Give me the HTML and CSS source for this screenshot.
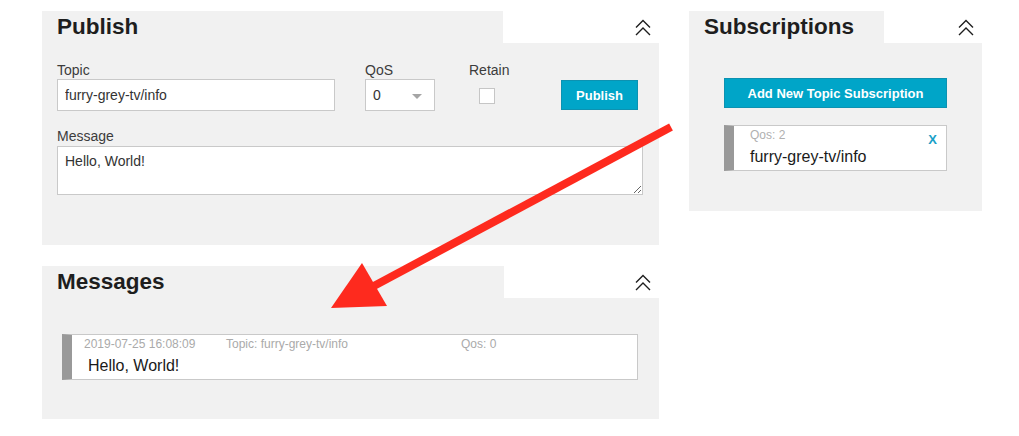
FILE: index.html
```html
<!DOCTYPE html>
<html lang="en">
<head>
<meta charset="utf-8">
<title>MQTT Client</title>
<link rel="stylesheet" href="styles.css">
</head>
<body>
<div class="page">
  <div class="col col-left">
    <section class="panel">
      <header class="panel-head">
        <h2 class="panel-title title-publish">Publish</h2>
        <div class="panel-toggle">
          <svg class="chevron" width="16" height="17" viewBox="0 0 16 17"><polyline points="1,8.5 8,1.5 15,8.5"/><polyline points="1,16 8,9 15,16"/></svg>
        </div>
      </header>
      <div class="panel-body publish-body">
        <div class="form-row">
          <div class="field field-topic">
            <label class="field-label">Topic</label>
            <input class="text-input" type="text" value="furry-grey-tv/info">
          </div>
          <div class="field field-qos">
            <label class="field-label">QoS</label>
            <div class="select-box"><span class="select-value">0</span><span class="select-arrow"></span></div>
          </div>
          <div class="field field-retain">
            <label class="field-label">Retain</label>
            <input class="check" type="checkbox">
          </div>
          <button class="btn btn-publish" type="button">Publish</button>
        </div>
        <div class="field field-message">
          <label class="field-label">Message</label>
          <textarea class="text-area">Hello, World!</textarea>
        </div>
      </div>
    </section>

    <section class="panel panel-messages">
      <header class="panel-head">
        <h2 class="panel-title title-messages">Messages</h2>
        <div class="panel-toggle">
          <svg class="chevron" width="16" height="17" viewBox="0 0 16 17"><polyline points="1,8.5 8,1.5 15,8.5"/><polyline points="1,16 8,9 15,16"/></svg>
        </div>
      </header>
      <div class="panel-body messages-body">
        <div class="msg-item">
          <div class="msg-meta">
            <span class="meta-date">2019-07-25 16:08:09</span>
            <span class="meta-topic">Topic: furry-grey-tv/info</span>
            <span class="meta-qos">Qos: 0</span>
          </div>
          <div class="msg-text">Hello, World!</div>
        </div>
      </div>
    </section>
  </div>

  <div class="col col-right">
    <section class="panel">
      <header class="panel-head">
        <h2 class="panel-title title-subs">Subscriptions</h2>
        <div class="panel-toggle">
          <svg class="chevron" width="16" height="17" viewBox="0 0 16 17"><polyline points="1,8.5 8,1.5 15,8.5"/><polyline points="1,16 8,9 15,16"/></svg>
        </div>
      </header>
      <div class="panel-body subs-body">
        <button class="btn btn-add" type="button">Add New Topic Subscription</button>
        <div class="sub-item">
          <div class="sub-qos">Qos: 2</div>
          <div class="sub-topic">furry-grey-tv/info</div>
          <span class="sub-close">X</span>
        </div>
      </div>
    </section>
  </div>
</div>

<svg class="annotation" width="1019" height="436" viewBox="0 0 1019 436">
  <line x1="671" y1="127" x2="372" y2="287" stroke="#fe2a1e" stroke-width="8"/>
  <polygon points="331,308 362,263 387,306" fill="#fe2a1e"/>
</svg>
</body>
</html>
```

FILE: styles.css
```css
* { box-sizing: border-box; }

html, body {
  margin: 0;
  padding: 0;
  background: #ffffff;
}

body {
  font-family: "Liberation Sans", Arial, Helvetica, sans-serif;
  color: #333;
  width: 1019px;
  height: 436px;
  overflow: hidden;
  position: relative;
}

.page {
  display: flex;
  gap: 30px;
  padding: 11px 0 0 42px;
}

.col-left { width: 617px; }
.col-right { width: 293px; }

.panel { background: transparent; }
.panel-messages { margin-top: 21px; }

.panel-head {
  display: flex;
  height: 32px;
}

.panel-title {
  margin: 0;
  background: #f1f1f1;
  font-size: 22.5px;
  font-weight: bold;
  line-height: 32px;
  color: #1e1e1e;
  padding-left: 15px;
}

.title-publish { width: 461px; }
.title-messages { width: 462px; }
.title-subs { width: 195px; }

.panel-toggle {
  flex: 1;
  background: #ffffff;
  display: flex;
  justify-content: flex-end;
  align-items: center;
  padding-right: 8px;
}

.chevron {
  display: block;
  fill: none;
  stroke: #1e1e1e;
  stroke-width: 1.4;
}

.panel-body { background: #f1f1f1; }

/* Publish */
.publish-body { padding: 19px 16px 50px 15px; }

.form-row {
  display: flex;
  align-items: flex-start;
}

.field-label {
  display: block;
  font-size: 14px;
  line-height: 17px;
  color: #3c3c3c;
}

.field-topic { width: 278px; margin-right: 30px; }
.field-qos { width: 70px; margin-right: 34px; }
.field-retain { width: 41px; display: flex; flex-direction: column; }

.text-input {
  display: block;
  width: 278px;
  height: 32px;
  border: 1px solid #c9c9c9;
  background: #fff;
  padding: 0 7px;
  font-family: inherit;
  font-size: 14px;
  color: #333;
  outline: none;
  margin: 0;
}

.select-box {
  display: flex;
  align-items: center;
  justify-content: space-between;
  width: 70px;
  height: 32px;
  border: 1px solid #c9c9c9;
  background: #fff;
  padding: 0 12px 0 7px;
  font-size: 14px;
  color: #333;
}

.select-arrow {
  width: 0;
  height: 0;
  border-left: 5px solid transparent;
  border-right: 5px solid transparent;
  border-top: 5px solid #a5a5a5;
  margin-top: 2px;
}

.check {
  appearance: none;
  -webkit-appearance: none;
  width: 16px;
  height: 16px;
  margin: 9px 0 0 10px;
  border: 1px solid #c6c6c6;
  background: #fff;
  border-radius: 0;
}

.btn {
  font-family: inherit;
  font-weight: bold;
  font-size: 13px;
  color: #fff;
  background: #00a5c8;
  border: 1px solid #0c92b1;
  border-radius: 0;
  padding: 0;
  cursor: pointer;
}

.btn-publish {
  width: 77px;
  height: 30px;
  margin: 18px 0 0 51px;
}

.field-message { margin-top: 17px; }
.field-message .field-label { margin-bottom: 1px; }

.text-area {
  display: block;
  width: 586px;
  height: 49px;
  border: 1px solid #c9c9c9;
  background: #fff;
  padding: 6px 7px;
  font-family: inherit;
  font-size: 14px;
  line-height: 16px;
  color: #333;
  outline: none;
  margin: 0;
  resize: vertical;
}

/* Messages */
.messages-body { padding: 36px 21px 39px 20px; }

.msg-item {
  background: #fff;
  border: 1px solid #c9c9c9;
  border-left: 10px solid #999;
  padding: 2px 0 3px 12px;
}

.msg-meta {
  display: flex;
  font-size: 12px;
  line-height: 14px;
  color: #aaa;
}

.meta-date { width: 142px; }
.meta-topic { width: 235px; }

.msg-text {
  margin-top: 5px;
  padding-left: 4px;
  font-size: 16px;
  line-height: 20px;
  color: #1a1a1a;
}

/* Subscriptions */
.subs-body { padding: 35px 35px 40px 35px; }

.btn-add {
  display: block;
  width: 223px;
  height: 30px;
}

.sub-item {
  position: relative;
  margin-top: 17px;
  background: #fff;
  border: 1px solid #c9c9c9;
  border-left: 10px solid #999;
  padding: 2px 0 3px 16px;
}

.sub-qos {
  font-size: 12px;
  line-height: 14px;
  color: #b0b0b0;
}

.sub-topic {
  margin-top: 5px;
  font-size: 16px;
  line-height: 20px;
  color: #1a1a1a;
}

.sub-close {
  position: absolute;
  top: 7px;
  right: 9px;
  font-size: 13px;
  line-height: 13px;
  font-weight: bold;
  color: #1a9fc8;
}

.annotation {
  position: absolute;
  left: 0;
  top: 0;
  pointer-events: none;
}
```
